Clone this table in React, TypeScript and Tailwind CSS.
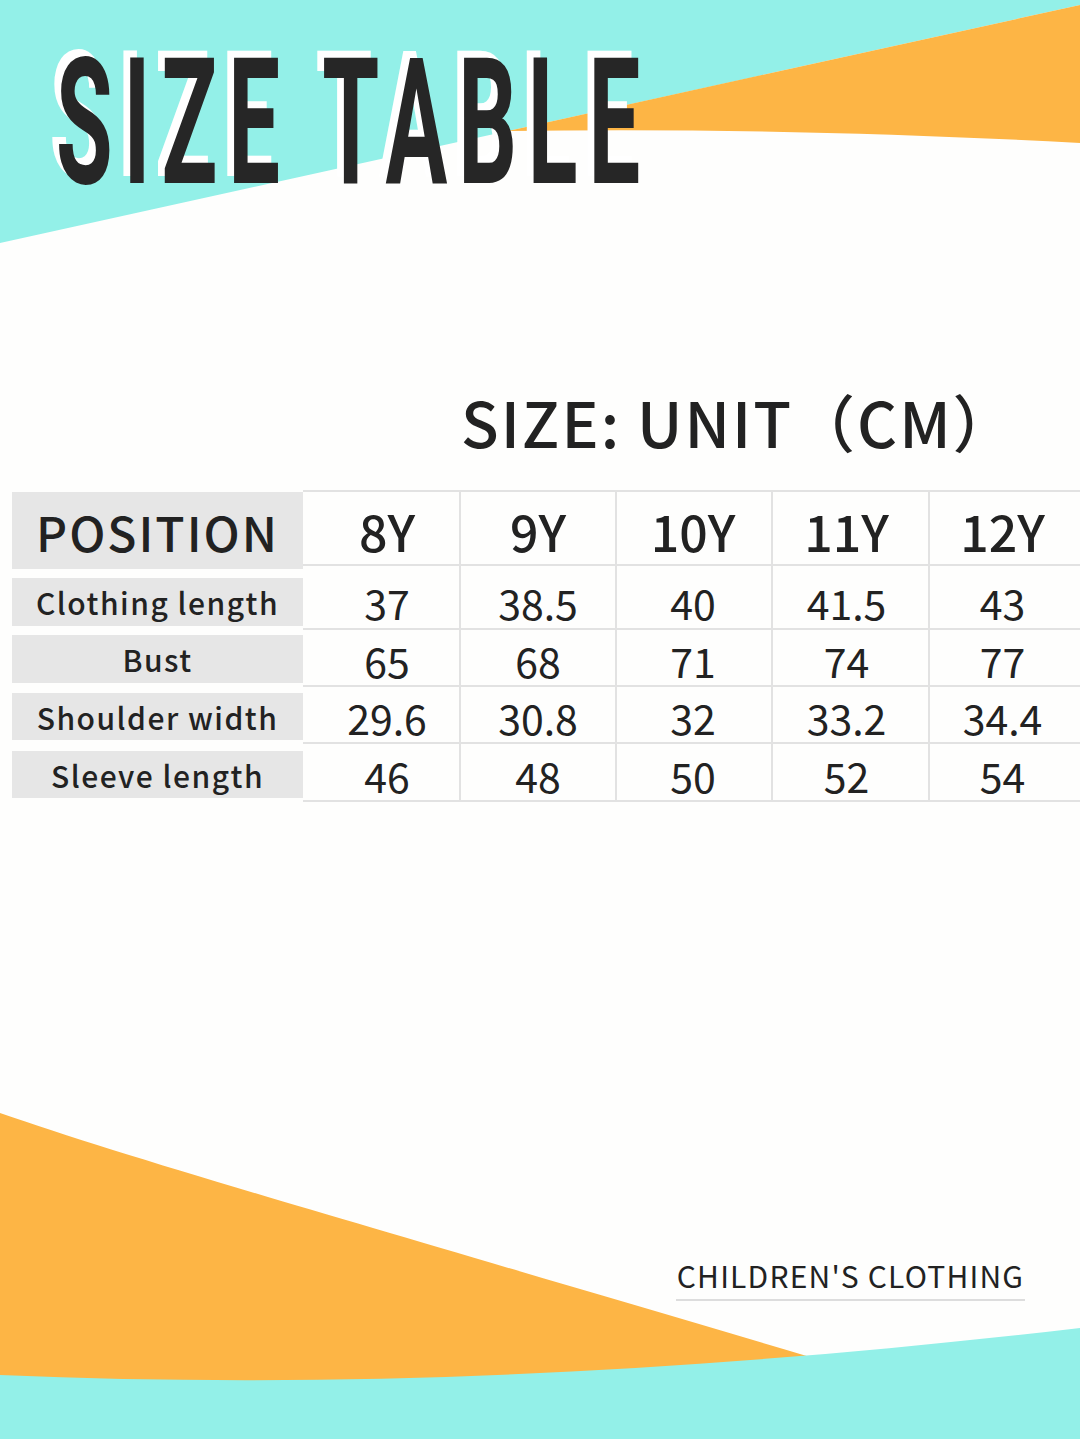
import React from "react";

const sizes = ["8Y", "9Y", "10Y", "11Y", "12Y"];
const rows: { label: string; values: string[] }[] = [
  { label: "Clothing length", values: ["37", "38.5", "40", "41.5", "43"] },
  { label: "Bust", values: ["65", "68", "71", "74", "77"] },
  { label: "Shoulder width", values: ["29.6", "30.8", "32", "33.2", "34.4"] },
  { label: "Sleeve length", values: ["46", "48", "50", "52", "54"] },
];

const cellPad = ["pl-[12px]", "", "pr-[2px]", "pr-[8px]", "pr-[8px]"];
const cellBorder = ["border-r-2", "border-r-2", "border-r-2", "border-r-2", ""];
const rowHeights = ["h-[64px]", "h-[57px]", "h-[57px]", "h-[58px]"];
const rowPad = ["pt-[10px]", "pt-[6px]", "pt-[6px]", "pt-[6px]"];
const labelBlocks = ["mt-[9px] h-[48px]", "mt-[9px] h-[48px]", "mt-[10px] h-[47px]", "mt-[11px] h-[47px]"];

export default function App() {
  return (
    <div className="relative w-[1080px] h-[1439px] overflow-hidden bg-[#fefefd] text-[#222222]">
      <svg className="absolute inset-0 z-0" width="1080" height="1439" viewBox="0 0 1080 1439">
        <path d="M0 0 H1080 V5 L0 243 Z" fill="#93f0e8" />
        <path d="M508 131 L1080 5 V143 C900 133 700 128 508 131 Z" fill="#fdb545" />
        <path d="M0 1113 C150 1165 400 1235 810 1357 L810 1410 L0 1410 Z" fill="#fdb545" />
        <path d="M0 1375 C350 1390 700 1372 1080 1328 V1439 H0 Z" fill="#93f0e8" />
      </svg>

      <div className="relative z-10 flex flex-col">
        <div className="pt-[34px] pl-[56px] h-[211px]">
          <div
            className="inline-block origin-left scale-x-[0.52] whitespace-nowrap text-[177px] leading-none font-bold tracking-[21px] text-[#262626] [text-shadow:-13px_-7px_0_#ffffff]"
            style={{ fontFamily: "Roboto, 'Liberation Sans', sans-serif" }}
          >
            SIZE TABLE
          </div>
        </div>

        <div
          className="mt-[179px] pl-[461px] h-[62px] text-[62px] leading-none font-medium tracking-[2px] whitespace-nowrap"
          style={{ fontFamily: "'Noto Sans CJK SC', 'Noto Sans', sans-serif" }}
        >
          SIZE: UNIT（CM）
        </div>

        <div
          className="mt-[38px] flex items-start"
          style={{ fontFamily: "'Noto Sans CJK SC', 'Noto Sans', sans-serif" }}
        >
          <div className="ml-[12px] mt-[2px] w-[291px] shrink-0 flex flex-col">
            <div className="h-[77px] bg-[#e6e6e6] flex items-center justify-center text-[48px] font-medium tracking-[2px] leading-none">
              POSITION
            </div>
            {rows.map((r, i) => (
              <div
                key={r.label}
                className={`${labelBlocks[i]} bg-[#e6e6e6] flex items-center justify-center text-[30px] font-medium tracking-[1.5px] leading-none`}
              >
                {r.label}
              </div>
            ))}
          </div>

          <div className="w-[780px] shrink-0 border-t-2 border-[#e2e2e2]">
            <div className="grid grid-cols-[158px_156px_156px_157px_153px] h-[74px] border-b-2 border-[#e2e2e2]">
              {sizes.map((s, j) => (
                <div
                  key={s}
                  className={`${cellBorder[j]} ${cellPad[j]} border-[#e2e2e2] flex items-center justify-center text-[50px] font-medium leading-none pt-[4px]`}
                >
                  {s}
                </div>
              ))}
            </div>
            {rows.map((r, i) => (
              <div
                key={r.label}
                className={`grid grid-cols-[158px_156px_156px_157px_153px] ${rowHeights[i]} border-b-2 border-[#e2e2e2]`}
              >
                {r.values.map((v, j) => (
                  <div
                    key={j}
                    className={`${cellBorder[j]} ${cellPad[j]} ${rowPad[i]} border-[#e2e2e2] flex items-center justify-center text-[41px] font-normal leading-none`}
                  >
                    {v}
                  </div>
                ))}
              </div>
            ))}
          </div>
        </div>

        <div className="mt-[458px] ml-[676px] w-[349px] flex flex-col items-center">
          <div
            className="text-[30px] leading-none tracking-[1.2px] whitespace-nowrap text-[#222222]"
            style={{ fontFamily: "'Noto Sans CJK SC', 'Noto Sans', sans-serif" }}
          >
            CHILDREN'S CLOTHING
          </div>
          <div className="mt-[9px] h-[2px] w-full bg-[#dddddd]" />
        </div>
      </div>
    </div>
  );
}
